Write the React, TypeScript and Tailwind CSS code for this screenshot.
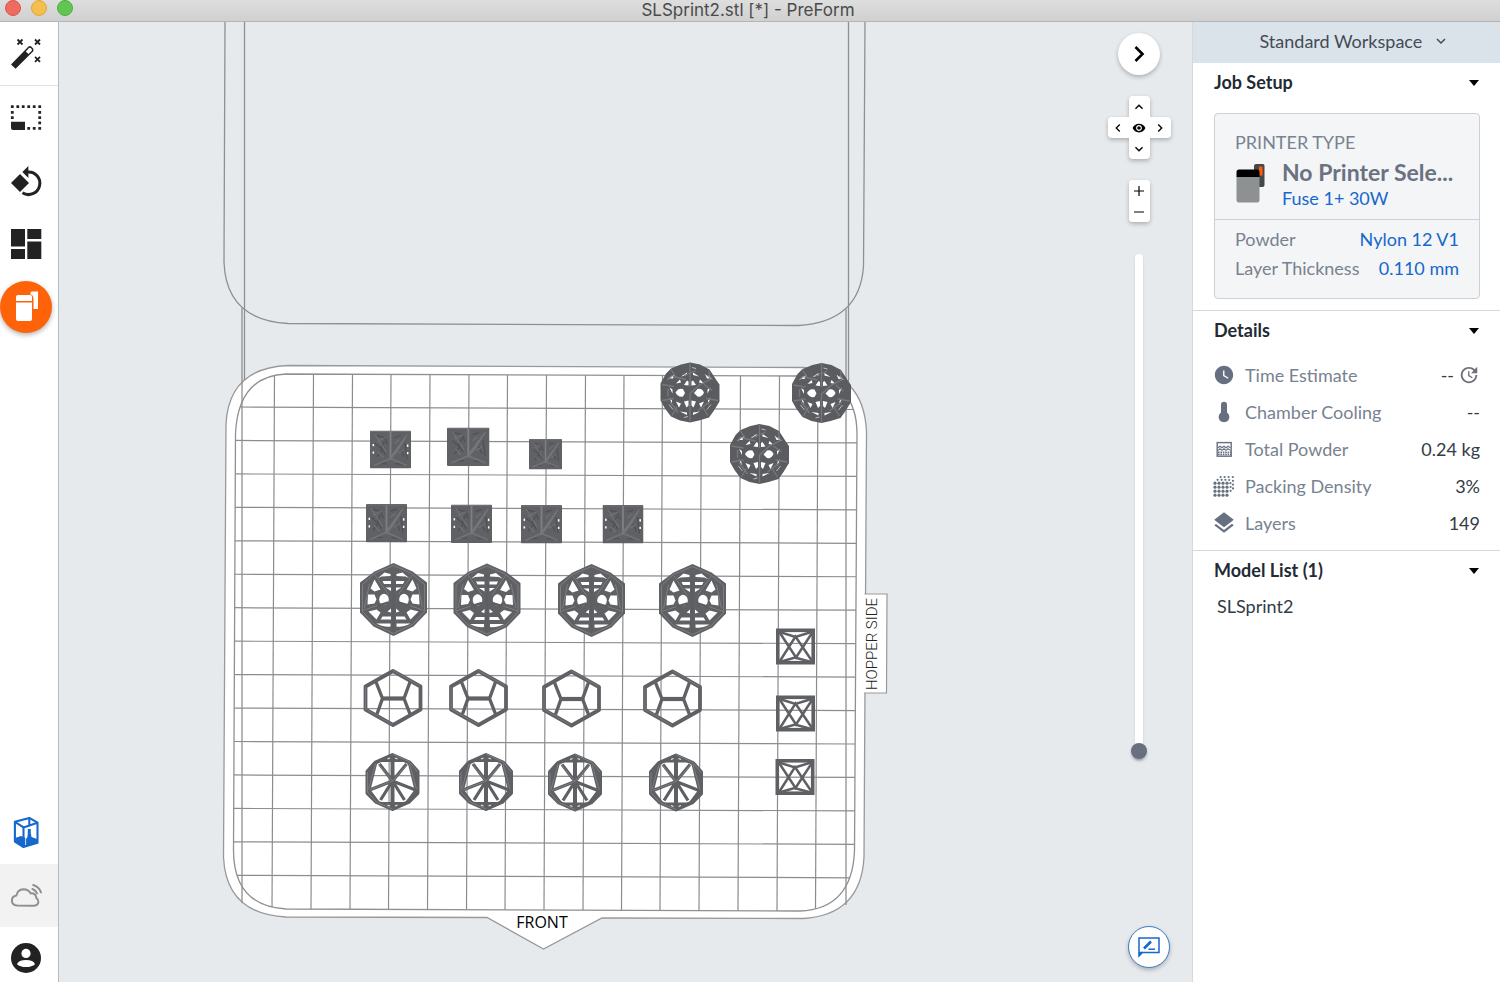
import type { ReactNode } from "react";
import {
  MdKeyboardArrowDown,
  MdKeyboardArrowLeft,
  MdKeyboardArrowRight,
  MdKeyboardArrowUp,
  MdLayers,
  MdRemoveRedEye,
  MdUpdate,
  MdWatchLater,
} from "react-icons/md";

type Point = [number, number];

/* ---------- Tool bar icons ---------- */

function WandIcon() {
  return (
    <svg viewBox="8 36 36 36" className="size-9" fill="none" stroke="#222" aria-hidden="true">
      <path d="M11 64.5 L28.5 46.6 Q30 45.4 31.5 46.8 L33 48.4 Q34.2 50 33 51.4 L15.6 68.8 Z" fill="#222" stroke="none" />
      <path d="M25.8 51.4 L29 48 Q30 47.4 30.9 48.2 L31.8 49.2 Q32.3 50 31.6 51 L28.4 54.1 Z" fill="#fff" stroke="none" />
      <g strokeWidth="1.8">
        <path d="M17.5 39.5 l5 5 m0 -5 l-5 5" />
        <path d="M35 39.5 l5 5 m0 -5 l-5 5" />
        <path d="M35 56.8 l5 5 m0 -5 l-5 5" />
      </g>
    </svg>
  );
}

function SizeIcon() {
  return (
    <svg viewBox="8 100 36 36" className="size-9" aria-hidden="true">
      <g fill="#222">
        {[12.3, 17.8, 23.2, 28.7, 34.2, 39.7].map((x) => (
          <rect key={x} x={x - 1.4} y="105.2" width="2.8" height="2.8" rx="0.5" />
        ))}
        {[112.4, 117.6].map((y) => (
          <rect key={y} x="10.9" y={y - 1.4} width="2.8" height="2.8" rx="0.5" />
        ))}
        {[112.4, 117.6, 122.9].map((y) => (
          <rect key={y} x="38.3" y={y - 1.4} width="2.8" height="2.8" rx="0.5" />
        ))}
        {[28.7, 34.2, 39.7].map((x) => (
          <rect key={x} x={x - 1.4} y="127" width="2.8" height="2.8" rx="0.5" />
        ))}
        <path d="M11 121.7 H25 V130 H13 Q11 130 11 128 Z" />
      </g>
    </svg>
  );
}

function RotateIcon() {
  return (
    <svg viewBox="8 163 36 36" className="size-9" aria-hidden="true">
      <path d="M11 183 L20 174 L29 183 L20 192 Z" fill="#222" />
      <path d="M27.5 172 A11.3 11.3 0 1 1 22.5 192.8" fill="none" stroke="#222" strokeWidth="3" />
      <path d="M22.4 172 L28.4 166 V178 Z" fill="#222" />
    </svg>
  );
}

function LayoutIcon() {
  return (
    <svg viewBox="8 226 36 36" className="size-9" fill="#222" aria-hidden="true">
      <rect x="11" y="229" width="14" height="17.5" />
      <rect x="11" y="249" width="14" height="10" />
      <rect x="27.3" y="229" width="14" height="10" />
      <rect x="27.3" y="241.5" width="14" height="17.5" />
    </svg>
  );
}

function PrintIcon() {
  return (
    <svg viewBox="0 281 52 52" className="size-[52px]" aria-hidden="true">
      <path d="M30.5 293 Q30.5 291.5 32 291.5 H38 V309 H33.5 V299 Q33.5 295 30.5 294.6 Z" fill="#fff" />
      <path d="M16 301 V297 Q16 295 18 295 H30 Q32 295 32 297 V301 Z" fill="#fff" />
      <path d="M16 302.6 H32 V319 Q32 321 30 321 H18 Q16 321 16 319 Z" fill="#fff" />
    </svg>
  );
}

function CubeIcon() {
  return (
    <svg viewBox="8 815 36 36" className="size-9" stroke="#1668cc" strokeWidth="2.1" strokeLinejoin="round" fill="none" aria-hidden="true">
      <path d="M15 838 L21 836 L27 838.5 L28 834 L31 834 L31.5 837 L37 839 V843 L23.5 847 L15 842 Z" fill="#1668cc" stroke="none" />
      <path d="M14.9 821.8 L29.3 817.9 L37.5 822.7 V842.7 L23.5 847 L14.9 841.7 Z" />
      <path d="M14.9 821.8 L23.5 827.4 L37.5 822.7 M23.5 827.4 V847 M29.3 818 V825" />
      <path d="M29.3 829 V837" strokeWidth="3" />
      <path d="M25.6 829 V845" stroke="#fff" strokeWidth="0.8" />
    </svg>
  );
}

function CloudIcon() {
  return (
    <svg viewBox="8 878 36 36" className="size-9" fill="none" stroke="#8f8f8f" strokeWidth="2" strokeLinecap="round" aria-hidden="true">
      <path d="M17 905.6 Q11.9 905.2 11.9 900.6 Q12 896.2 16.4 895.6 Q17.4 889.6 23.4 889.2 Q28.6 889.2 30.6 893.4 Q35.8 893 36.4 898.2 Q38.6 899.6 38.4 902.2 Q37.8 905.6 34.2 905.7 Z" strokeLinejoin="round" />
      <path d="M32.4 889 Q35.6 890 37 893.4" />
      <path d="M33.2 885 Q39 886.6 41 892.4" />
    </svg>
  );
}

function AccountIcon() {
  return (
    <svg viewBox="0 0 30 30" className="size-[30px]" aria-hidden="true">
      <circle cx="15" cy="15" r="15" fill="#222" />
      <circle cx="15" cy="10.4" r="4.6" fill="#fff" />
      <path d="M6 21.2 Q7.6 17 15 17 Q22.4 17 24 21.2 Q21 24 15 24 Q9 24 6 21.2 Z" fill="#fff" />
    </svg>
  );
}

/* ---------- Detail icons ---------- */

function ThermometerIcon() {
  return (
    <svg viewBox="0 0 20 22" className="h-[22px] w-5" fill="#667080" aria-hidden="true">
      <path d="M7 3.6 Q7 0.8 10 0.8 Q13 0.8 13 3.6 V11.6 Q15.4 13.2 15.4 16 Q15.2 21 10 21.2 Q4.8 21 4.6 16 Q4.6 13.2 7 11.6 Z" />
    </svg>
  );
}

function PowderIcon() {
  return (
    <svg viewBox="0 0 20 20" className="size-5" aria-hidden="true">
      <rect x="3.2" y="3.6" width="14" height="13.6" fill="none" stroke="#667080" strokeWidth="1.4" />
      <path d="M4 8.8 l2 -1.6 l2 1.6 l2 -1.6 l2 1.6 l2 -1.6 l2.4 1.6 M4 11.4 l2 -1.6 l2 1.6 l2 -1.6 l2 1.6 l2 -1.6 l2.4 1.6" fill="none" stroke="#667080" strokeWidth="1.1" />
      <path d="M4 13.3 H17 M4 15.4 H17" stroke="#667080" strokeWidth="1.6" strokeDasharray="1.6 0.8" />
    </svg>
  );
}

function DensityIcon() {
  const front: Point[] = [];
  for (let r = 0; r < 4; r++) for (let c = 0; c < 4; c++) front.push([1 + c * 4, 7.2 + r * 4]);
  const back: Point[] = [[3.6, 3.8], [7.6, 3.8], [11.4, 3.8], [15.2, 4], [6.6, 1], [10.6, 1], [14.6, 1], [18.8, 1], [16.4, 7.2], [19, 4.8], [19, 8.6], [16.6, 11], [19, 12.4], [16.6, 14.8]];
  return (
    <svg viewBox="0 0 20 20" className="size-5 overflow-visible" fill="#667080" aria-hidden="true">
      {front.map(([x, y]) => <circle key={`${x}-${y}`} cx={x} cy={y} r="1.6" />)}
      {back.map(([x, y]) => <circle key={`${x}-${y}`} cx={x} cy={y} r="1.1" />)}
    </svg>
  );
}

function PrinterPicture() {
  return (
    <svg viewBox="0 0 32 42" className="h-[42px] w-8 shrink-0" aria-hidden="true">
      <path d="M19 3 Q19 1 21 1 H28 Q29.5 1 29.5 3 V22 Q29.5 24 27.5 24 H24 V8 H19 Z" fill="#45474a" />
      <rect x="24" y="3.5" width="3.5" height="9" fill="#ff5b0a" />
      <path d="M1.5 14 V9 Q1.5 6.5 4 6.5 H22 Q24.5 6.5 24.5 9 V14 Z" fill="#000" />
      <path d="M1.5 14 H24.5 V37 Q24.5 39.5 22 39.5 H4 Q1.5 39.5 1.5 37 Z" fill="#8d9192" />
    </svg>
  );
}

/* ---------- Printed parts ---------- */

function Ball({ x, y }: { x: number; y: number }) {
  return (
    <g transform={`translate(${x} ${y})`}>
      <path d="M0 -30 L10 -28 L19.5 -23 L26 -13 L29.5 -8 L29.5 9 L24 18 L19 25 L9 28 L0 30 L-10 28 L-19 24 L-25 16 L-29.5 8 L-29.5 -9 L-24 -19 L-19 -24 L-9 -28 Z" fill="#5b5c60" />
      <g fill="#fff">
        <path d="M-14.5 0 Q-12 -5 -7 -3.5 L-5 0.5 L-7 4 Q-12 5 -14.5 0 Z" />
        <path d="M14 0 Q12 -5 7.5 -3.5 L4 0.5 L7.5 4 Q12 5 14 0 Z" />
        <path d="M-6 -7.5 L-3 -12 L-1.5 -11 V-7 Z M6 -7.5 L3 -12 L1.5 -11 V-7 Z" />
        <path d="M-6 9 L-1.5 8 V13 L-3.5 15 Z M6 9 L1.5 8 V13 L3.5 15 Z" />
        <path d="M-14 -9 L-10 -13 L-9 -10 Z M14 -9 L10 -13 L9 -10 Z M-14 9 L-11 15 L-9 11 Z M14 9 L11 15 L9 11 Z" />
        <path d="M-9 -16 L-3 -20 V-17.5 Z M9 -16 L3 -20 V-17.5 Z M-10 19 L-3 20 V22.5 Z M10 19 L3 20 V22.5 Z" />
        <path d="M-20.5 -5 L-17.5 -3 V1 Z M20.5 -5 L17.5 -3 V1 Z M-20.5 5 L-18 8 V12 Z M20.5 5 L18 8 V12 Z" />
        <path d="M-20 -14 L-15 -18.5 L-17 -14 Z M20 -14 L15 -18.5 L17 -14 Z" />
      </g>
      <g fill="none" stroke="#77787c" strokeWidth="1.3">
        <path d="M0 -29 V-6 M-28 -8 L-16 -6 M0 1 L10 -8 L20 -13 L19 -22 M-28 8 L-16 6 M16 6 L28 8 M-18 23 L-13 14 M0 1 V29 M13 15 L18 23 M-19 -23 L-14 -15" />
        <path d="M-6 -17 L6 -22 M-17 -16 L-4 -13 M-22 -4 V4 M22 -2 L14 -8 M-20 9 L-12 20 M8 18 L20 9" />
      </g>
      <g fill="none" stroke="#b9babd" strokeWidth="1">
        <path d="M-22 -13 L-18 -17 M22 -13 L18 -17 M-21 12 L-17 17 M21 12 L17 17 M-6 25 L-2 24 M2 -25 L6 -24" />
      </g>
    </g>
  );
}

function Sphere({ x, y }: { x: number; y: number }) {
  return (
    <g transform={`translate(${x} ${y})`} strokeLinejoin="round">
      <path d="M0 -36.5 L19 -28 L33.5 -17 V13 L20 27 L0 36.5 L-20 27 L-33.5 13 V-17 L-19 -28 Z" fill="#606165" />
      <g fill="#fff">
        <path d="M-16 -21 L-9 -27 L-3 -25.5 V-23.5 L-12 -23 Z M16 -21 L9 -27 L3 -25.5 V-23.5 L12 -23 Z" />
        <path d="M-19 -20 L-13 -10 L-19 -8 L-23 -11 Z M19 -20 L13 -10 L19 -8 L23 -11 Z" />
        <path d="M-25.5 -5 L-19 -5 L-17 0 L-19 4 L-26 5 Z M25.5 -5 L19 -5 L17 0 L19 4 L26 5 Z" />
        <ellipse cx="-9.5" cy="0" rx="4.8" ry="5.8" />
        <ellipse cx="10.5" cy="0" rx="4.8" ry="5.8" />
        <path d="M-11 -18.5 H-2.5 V-15.5 H-9.5 Z M11 -18.5 H2.5 V-15.5 H9.5 Z M-8 -12 H-2.5 V-8.5 Z M8 -12 H2.5 V-8.5 Z" />
        <path d="M-25 12 L-17 10 L-13 13 L-17 20 Z M25 12 L17 10 L13 13 L17 20 Z" />
        <path d="M-11 17 H-2.5 V20 H-13 Z M11 17 H2.5 V20 H13 Z M-6 12 L-2.5 9 V13 Z M6 12 L2.5 9 V13 Z" />
        <path d="M-17 24 H-3 V27 Q-9 28 -17 24 Z M17 24 H3 V27 Q9 28 17 24 Z" />
      </g>
      <path d="M0 -26 V34 M-19 -25 L-5 -5 M5 -5 L19 -25 M-31 11 L-5 3 M5 3 L31 11" fill="none" stroke="#5d5e62" strokeWidth="2.4" />
      <g fill="none" stroke="#7d7e82" strokeWidth="1">
        <path d="M0 -34 L18 -26 L31 -15 V12 L19 25 L0 34 L-19 25 L-31 12 V-15 L-19 -26 Z" />
        <path d="M-19 -25 L-5 -5 M5 -5 L19 -25 M-31 11 L-16 6 M31 11 L16 6 M-24 -16 L-29 8 M24 -16 L29 8" />
      </g>
    </g>
  );
}

function Dodecahedron({ x, y }: { x: number; y: number }) {
  return (
    <g transform={`translate(${x} ${y})`} fill="none" stroke="#606165" strokeWidth="3.8" strokeLinejoin="round">
      <path d="M0 -27 L27.5 -11.5 V11.5 L0 27 L-27.5 11.5 V-11.5 Z" />
      <path d="M-10.5 0.5 H11" strokeWidth="4.2" />
      <path d="M-17 -16 L-10.5 0.5 L-16 16 M17 -16 L11 0.5 L17 16" strokeWidth="3.4" />
      <path d="M0 -27.5 L27 -12 M-27.5 -11 V11 L-1 26.5" stroke="#7d7e82" strokeWidth="0.8" />
    </g>
  );
}

function Wheel({ x, y }: { x: number; y: number }) {
  return (
    <g transform={`translate(${x} ${y})`} fill="none" stroke="#5f6064" strokeLinejoin="round">
      <path d="M0 -27 L17 -19.5 L25 -10.5 V11 L16 20 L0 27 L-16 20 L-25 11 V-10.5 L-17 -19.5 Z" strokeWidth="4" />
      <path d="M-16 -20 L-25 -10 L-23 8 Z M16 -20 L25 -10 L23 8 Z M-23 8 L-25 11 L-14 20 Z M23 8 L25 11 L14 20 Z M-14 -21 H14 L0 -27 Z M-14 21 H14 L0 27 Z" fill="#5f6064" strokeWidth="2" />
      <path d="M0 -26 V26" strokeWidth="4" />
      <path d="M-13 -18 L0 -1 L14 -18 M-23 8 L0 -1 L23 8 M-12 18 L0 -1 L12 18" strokeWidth="3.2" />
      <path d="M-14 -18 L0 -1 L15 -18 M0 -1 L-23 8 M0 -28 L17 -20 L25 -10 M-25 -10 V10 L-16 20 L0 27 M-17 -18 L-24 7 M17 -18 L24 7" stroke="#808185" strokeWidth="0.9" />
      <path d="M-5 -23 L-2.5 -24 M2.5 -24 L5 -23 M-5 23 L-2.5 24 M2.5 24 L5 23" stroke="#e4e5e6" strokeWidth="1.3" />
    </g>
  );
}

function SolidBox({ x, y, w, h, holes }: { x: number; y: number; w: number; h: number; holes: boolean }) {
  return (
    <svg x={x} y={y} width={w} height={h} viewBox="0 0 40 38" preserveAspectRatio="none">
      <rect width="40" height="38" rx="1" fill="#606165" />
      <g fill="none" stroke="#505155" strokeWidth="1.3">
        <path d="M6 5 L14 7 L17 14 M24 7 L30 5 M5 13 L12 19 L7 26 M14 11 L11 17 L15 24 M30 19 L33 26 M34 12 L36 28 M10 33 L16 33 M25 33 L34 34" />
      </g>
      <g fill="none" stroke="#717276" strokeWidth="1.2">
        <path d="M5 4 L16 22 M7 11 L15 7 M8 21 L13 27 M27 23 L33 19 M24 13 L29 9 M1 1 H39" />
        <path d="M4 35 L20 28 L36 35" strokeWidth="1.8" />
        <path d="M20 1 V28" stroke="#7e7f83" strokeWidth="1.8" />
        <path d="M18.5 28 L35 5 L37 4 L27 21 L20 30 Z" fill="#75767a" stroke="none" />
      </g>
      {holes && (
        <g fill="#fff">
          <rect x="2.5" y="13.5" width="1.5" height="2.2" />
          <rect x="2.5" y="21" width="1.5" height="2.2" />
          <rect x="36" y="14" width="1.5" height="2.4" />
          <rect x="36" y="21.5" width="1.5" height="2.2" />
        </g>
      )}
    </svg>
  );
}

function OpenBox({ x, y }: { x: number; y: number }) {
  return (
    <g transform={`translate(${x} ${y})`} fill="none" stroke="#5f6064">
      <rect x="1.8" y="1.8" width="35.4" height="32.4" strokeWidth="3.6" />
      <path d="M2 3 L19.5 8.5 L37 3 M2 34 L19 29 L37 34" strokeWidth="2.4" />
      <path d="M3 3 L20 29 L37 3 M3 34 L19.5 8 L37 34" strokeWidth="2.5" />
    </g>
  );
}

/* ---------- Build plate ---------- */

const COLUMNS = [274.5, 313.5, 352.5, 391, 430, 469, 507.5, 546.5, 585.5, 624, 662.5, 701.5, 740.5, 779.5, 818];
const ROWS = Array.from({ length: 15 }, (_, i) => 407 + i * 33.45);

function BuildPlate() {
  return (
    <svg
      viewBox="59 22 1133 960"
      preserveAspectRatio="xMidYMid meet"
      className="absolute inset-0 size-full"
      role="img"
      aria-label="Build chamber seen from above"
    >
      <defs>
        <clipPath id="plate-inner">
          <path d="M286 374 L799 376 Q857 378 857 434 L854.5 851 Q852 909 800 911 L286 909 Q234 906 233.5 851 L235.5 434 Q238 376 286 374 Z" />
        </clipPath>
      </defs>
      <path
        d="M288 365.5 L803 367.5 Q864 371 866.5 432 L864 857 Q861 915 803 918.5 L602 918 L543.5 949 L487 917.5 L286 917 Q226 914 223.5 857 L226 424 Q229 368 288 365.5 Z"
        fill="#fff"
        stroke="#97999c"
        strokeWidth="1.3"
      />
      <path d="M864.5 594 H887 L886.5 693 H864.5" fill="#fff" stroke="#97999c" strokeWidth="1.2" />
      <path d="M864 595 V692" stroke="#fff" strokeWidth="4" />

      <g clipPath="url(#plate-inner)" stroke="#8b8c8e" strokeWidth="1.2">
        {COLUMNS.map((x) => <path key={x} d={`M${x} 374 L${x - 2.5} 911`} />)}
        {ROWS.map((y) => <path key={y} d={`M233 ${y} L857 ${y + 2.5}`} />)}
      </g>
      <g fill="none" stroke="#8f9093" strokeWidth="1.3">
        <path d="M286 374 L799 376 Q857 378 857 434 L854.5 851 Q852 909 800 911 L286 909 Q234 906 233.5 851 L235.5 434 Q238 376 286 374 Z" />
        <path d="M225 22 L224 262 Q226 320 288 323.5 L798 325.5 Q860 322 863.5 266 L865 22" />
        <path d="M244.5 22 V380 M242 308 V903 M848.5 22 V382 M846 308 V905" />
      </g>

      <SolidBox x={370} y={430.5} w={41} h={38} holes />
      <SolidBox x={447} y={427.5} w={42.5} h={38.5} holes={false} />
      <SolidBox x={529} y={439} w={33} h={30.5} holes={false} />
      <SolidBox x={366} y={504} w={41} h={38.5} holes />
      <SolidBox x={451} y={504.5} w={41} h={38.5} holes />
      <SolidBox x={521} y={505} w={41} h={38.5} holes />
      <SolidBox x={602.5} y={505} w={41} h={38.5} holes />

      <Ball x={690} y={392.5} />
      <Ball x={821.5} y={393} />
      <Ball x={759.5} y={454} />

      <Sphere x={393.5} y={599.5} />
      <Sphere x={487} y={600} />
      <Sphere x={591.5} y={600.5} />
      <Sphere x={692.5} y={600.5} />

      <Dodecahedron x={393} y={698} />
      <Dodecahedron x={478.5} y={698} />
      <Dodecahedron x={571.5} y={698.5} />
      <Dodecahedron x={672.5} y={698.5} />

      <Wheel x={392.5} y={782} />
      <Wheel x={486} y={782} />
      <Wheel x={575} y={782.5} />
      <Wheel x={676} y={782.5} />

      <OpenBox x={776} y={628.5} />
      <OpenBox x={776} y={695.5} />
      <OpenBox x={775.5} y={759} />

      <text x="542" y="928" textAnchor="middle" className="fill-black font-['Open_Sans',sans-serif] text-[16px]">
        FRONT
      </text>
      <text transform="translate(877 644) rotate(-90)" textAnchor="middle" className="fill-[#222] font-['Roboto',sans-serif] text-[15px] font-light">
        HOPPER SIDE
      </text>
    </svg>
  );
}

/* ---------- Building blocks ---------- */

function ToolButton({ label, className, children }: { label: string; className?: string; children: ReactNode }) {
  return (
    <button type="button" aria-label={label} className={`flex w-full shrink-0 items-center justify-center pr-[6px] ${className ?? "h-[63px]"}`}>
      {children}
    </button>
  );
}

function SectionHeading({ children }: { children: ReactNode }) {
  return (
    <h2>
      <button type="button" aria-expanded="true" className="flex w-full items-center justify-between text-[18px] leading-6 font-bold text-[#232a34]">
        {children}
        <svg viewBox="0 0 12 8" className="mt-[2px] h-2 w-3" aria-hidden="true">
          <path d="M1 1 H11 L6 7 Z" fill="#000" />
        </svg>
      </button>
    </h2>
  );
}

function DetailRow({ icon, label, children }: { icon: ReactNode; label: string; children: ReactNode }) {
  return (
    <div className="flex h-[37px] items-center">
      <dt className="flex flex-1 items-center gap-[11px] text-[#788290]">
        <span className="flex w-5 justify-center">{icon}</span>
        {label}
      </dt>
      <dd className="flex items-center gap-1 text-[#333b46]">{children}</dd>
    </div>
  );
}

/* ---------- Page regions ---------- */

function TitleBar() {
  return (
    <header className="grid h-[22px] shrink-0 grid-cols-[1fr_auto_1fr] items-start border-b border-[#b5b5b5] bg-linear-to-b from-[#dedede] to-[#d0d0d0]">
      <div className="flex gap-[10px] pl-[5px]">
        <button type="button" aria-label="Close" className="size-4 rounded-full border border-[#dd5449] bg-[#ed6b60]" />
        <button type="button" aria-label="Minimize" className="size-4 rounded-full border border-[#dfa53a] bg-[#f5bf4f]" />
        <button type="button" aria-label="Zoom" className="size-4 rounded-full border border-[#4fac3d] bg-[#61c554]" />
      </div>
      <h1 className="pr-1 font-['Inter',sans-serif] text-[17px] leading-5 text-[#4a4a4a]">SLSprint2.stl [*] - PreForm</h1>
    </header>
  );
}

function ToolBar() {
  return (
    <nav aria-label="Tools" className="flex w-[59px] shrink-0 flex-col border-r border-[#b3bcc3] bg-white">
      <ToolButton label="One-click print" className="h-[64px] border-b border-[#dfe1e3]"><WandIcon /></ToolButton>
      <ToolButton label="Size"><SizeIcon /></ToolButton>
      <ToolButton label="Orientation"><RotateIcon /></ToolButton>
      <ToolButton label="Layout"><LayoutIcon /></ToolButton>
      <ToolButton label="Print">
        <span className="rounded-full bg-[#ff6309] shadow-[0_2px_5px_rgba(0,0,0,0.3)]"><PrintIcon /></span>
      </ToolButton>
      <div className="mt-auto">
        <ToolButton label="Printer view"><CubeIcon /></ToolButton>
        <ToolButton label="Remote print" className="h-[63px] bg-[#f2f2f2]"><CloudIcon /></ToolButton>
        <ToolButton label="Account" className="h-[55px] pt-[6px]"><AccountIcon /></ToolButton>
      </div>
    </nav>
  );
}

function ViewControls() {
  const pad = "flex size-[21px] items-center justify-center bg-white text-black";
  return (
    <div className="absolute top-[11px] right-[22px] bottom-[223px] flex w-[62px] flex-col items-center">
      <button type="button" aria-label="Collapse panel" className="flex size-[42px] shrink-0 items-center justify-center rounded-full bg-white shadow-[0_2px_4px_rgba(0,0,0,0.25)]">
        <svg viewBox="0 0 20 20" className="size-5" fill="none" stroke="#000" strokeWidth="2.6" aria-hidden="true">
          <path d="M6.5 3 L13.5 10 L6.5 17" />
        </svg>
      </button>
      <div className="mt-[21px] grid shrink-0 grid-cols-[21px_21px_21px] drop-shadow-[0_2px_2px_rgba(0,0,0,0.25)]">
        <button type="button" aria-label="Look up" className={`${pad} col-start-2 rounded-t`}><MdKeyboardArrowUp className="size-4" /></button>
        <button type="button" aria-label="Look left" className={`${pad} col-start-1 rounded-l`}><MdKeyboardArrowLeft className="size-4" /></button>
        <button type="button" aria-label="Reset view" className={pad}><MdRemoveRedEye className="size-[14px]" /></button>
        <button type="button" aria-label="Look right" className={`${pad} rounded-r`}><MdKeyboardArrowRight className="size-4" /></button>
        <button type="button" aria-label="Look down" className={`${pad} col-start-2 rounded-b`}><MdKeyboardArrowDown className="size-4" /></button>
      </div>
      <div className="mt-[21px] flex shrink-0 flex-col overflow-hidden rounded bg-white shadow-[0_2px_4px_rgba(0,0,0,0.25)]">
        <button type="button" aria-label="Zoom in" className={pad}>
          <svg viewBox="0 0 10 10" className="size-[10px]" stroke="#000" strokeWidth="1.2" aria-hidden="true"><path d="M0 5 H10 M5 0 V10" /></svg>
        </button>
        <button type="button" aria-label="Zoom out" className={pad}>
          <svg viewBox="0 0 10 10" className="size-[10px]" stroke="#000" strokeWidth="1.2" aria-hidden="true"><path d="M0 5 H10" /></svg>
        </button>
      </div>
      <input
        type="range"
        aria-label="Layer slider"
        min={0}
        max={149}
        defaultValue={0}
        className="mt-[32px] min-h-0 w-4 flex-1 appearance-none bg-transparent [direction:rtl] [writing-mode:vertical-lr] [&::-webkit-slider-runnable-track]:w-2 [&::-webkit-slider-runnable-track]:rounded-full [&::-webkit-slider-runnable-track]:bg-white [&::-webkit-slider-runnable-track]:shadow-[0_1px_2px_rgba(0,0,0,0.15)] [&::-webkit-slider-thumb]:-ml-1 [&::-webkit-slider-thumb]:size-4 [&::-webkit-slider-thumb]:appearance-none [&::-webkit-slider-thumb]:rounded-full [&::-webkit-slider-thumb]:bg-[#687080] [&::-webkit-slider-thumb]:shadow-[0_2px_3px_rgba(0,0,0,0.25)]"
      />
    </div>
  );
}

function Viewport() {
  return (
    <main className="relative min-w-0 flex-1 overflow-hidden bg-[#e6eaed]">
      <BuildPlate />
      <ViewControls />
      <button type="button" aria-label="Send feedback" className="absolute right-[22px] bottom-[14px] flex size-[42px] items-center justify-center rounded-full border border-[#3f7dc4] bg-white shadow-[0_2px_4px_rgba(0,0,0,0.25)]">
        <svg viewBox="0 0 24 24" className="size-6" fill="none" stroke="#1668cc" strokeWidth="1.5" aria-hidden="true">
          <path d="M2 21 V3 H22 V17.5 H5.5 Z" />
          <path d="M2 21 V17 H6 Z" fill="#1668cc" strokeWidth="0.5" />
          <path d="M7 13.5 L14 6.5" strokeWidth="2.6" />
          <path d="M11.5 14.2 H18" />
        </svg>
      </button>
    </main>
  );
}

function SidePanel() {
  return (
    <aside className="w-[308px] shrink-0 border-l border-[#d3d9df] bg-white font-['Lato',sans-serif] text-[18px] leading-6">
      <div className="flex h-[41px] items-center justify-center bg-[#dbe3ea] pb-1 pl-4 text-[#434b56]">
        <select aria-label="Workspace" className="appearance-none bg-transparent pr-2">
          <option>Standard Workspace</option>
        </select>
        <MdKeyboardArrowDown className="size-[18px]" aria-hidden="true" />
      </div>

      <section className="border-b border-[#d5d9df] pt-[7px] pr-5 pb-[11px] pl-[21px]">
        <SectionHeading>Job Setup</SectionHeading>
        <div className="mt-[19px] rounded border border-[#cdd0d4] bg-[#f4f5f6] text-[#788290]">
          <div className="border-b border-[#cdd0d4] px-5 pt-4 pb-[9px]">
            <h3 className="uppercase">Printer type</h3>
            <div className="mt-1 flex items-center gap-[15px]">
              <PrinterPicture />
              <div className="min-w-0">
                <p className="text-[23px] leading-7 font-bold whitespace-nowrap text-[#6a7282]">No Printer Sele...</p>
                <a href="#printer" className="text-[#1668cc]">Fuse 1+ 30W</a>
              </div>
            </div>
          </div>
          <dl className="flex flex-col gap-[5px] px-5 pt-[7px] pb-[18px]">
            <div className="flex justify-between">
              <dt>Powder</dt>
              <dd className="text-[#1668cc]">Nylon 12 V1</dd>
            </div>
            <div className="flex justify-between">
              <dt>Layer Thickness</dt>
              <dd className="text-[#1668cc]">0.110 mm</dd>
            </div>
          </dl>
        </div>
      </section>

      <section className="border-b border-[#d5d9df] pt-[7px] pr-5 pb-[9px] pl-[21px]">
        <SectionHeading>Details</SectionHeading>
        <dl className="mt-[14px]">
          <DetailRow icon={<MdWatchLater className="size-[22px] shrink-0 text-[#667080]" />} label="Time Estimate">
            --
            <button type="button" aria-label="Update estimate"><MdUpdate className="size-[22px] text-[#6d7076]" /></button>
          </DetailRow>
          <DetailRow icon={<ThermometerIcon />} label="Chamber Cooling">--</DetailRow>
          <DetailRow icon={<PowderIcon />} label="Total Powder">0.24 kg</DetailRow>
          <DetailRow icon={<DensityIcon />} label="Packing Density">3%</DetailRow>
          <DetailRow icon={<MdLayers className="size-[26px] shrink-0 text-[#667080]" />} label="Layers">149</DetailRow>
        </dl>
      </section>

      <section className="pt-[7px] pr-5 pl-[21px]">
        <SectionHeading>Model List (1)</SectionHeading>
        <ul className="mt-3 pl-[3px] text-[#333b46]">
          <li>SLSprint2</li>
        </ul>
      </section>
    </aside>
  );
}

export default function App() {
  return (
    <div className="flex h-screen flex-col overflow-hidden">
      <TitleBar />
      <div className="flex min-h-0 flex-1">
        <ToolBar />
        <Viewport />
        <SidePanel />
      </div>
    </div>
  );
}
